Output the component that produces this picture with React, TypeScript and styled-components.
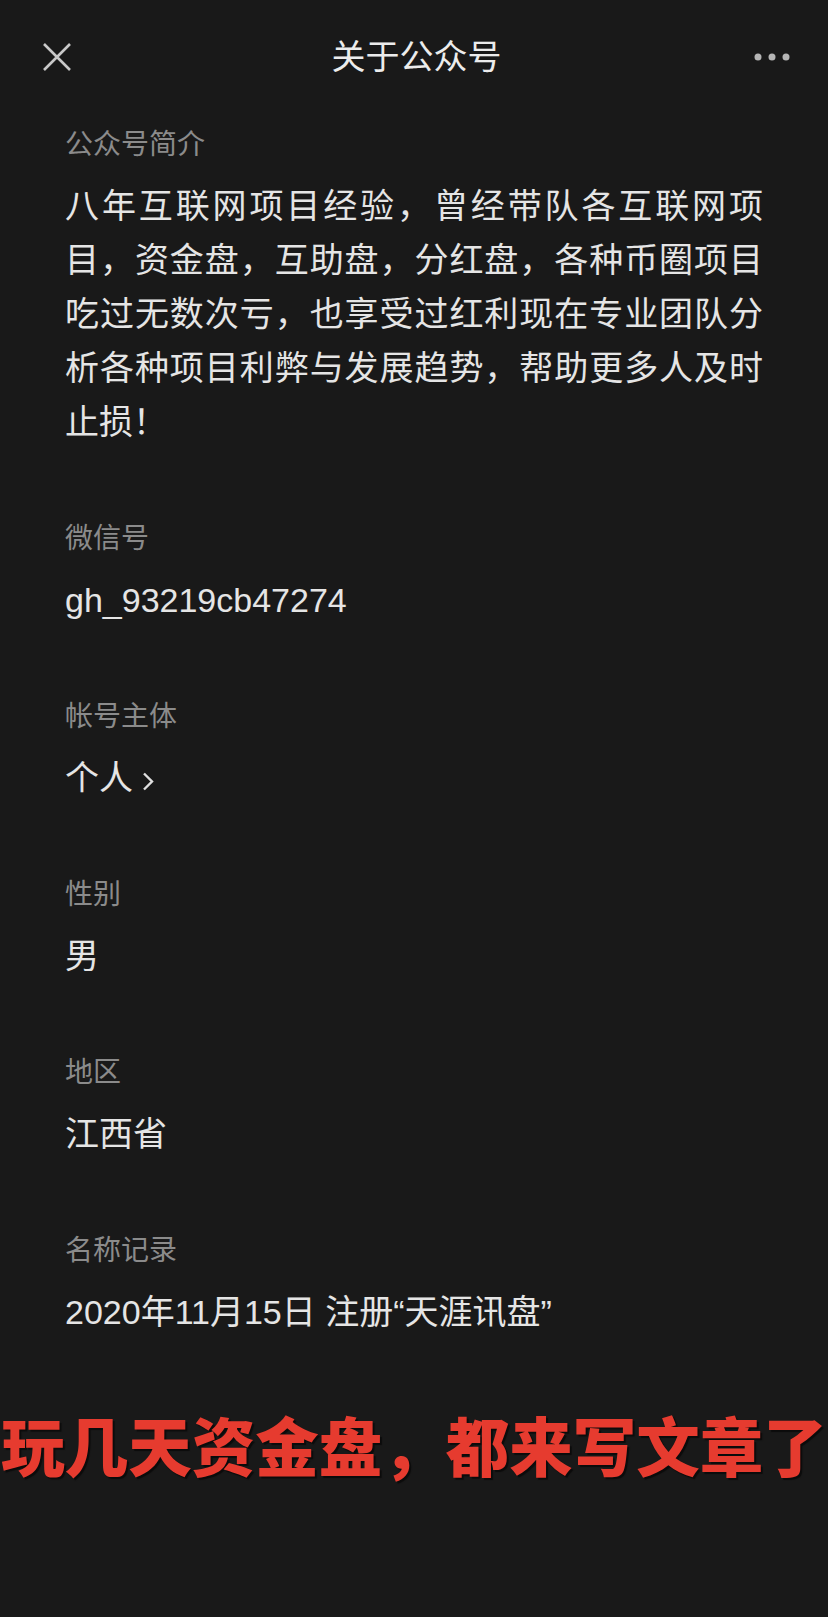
import React from "react";
import styled, { createGlobalStyle } from "styled-components";

const GlobalStyle = createGlobalStyle`
  html, body {
    margin: 0;
    padding: 0;
    background: #191919;
  }
  * { box-sizing: border-box; }
`;

const FONT = `"Liberation Sans", "Noto Sans CJK SC", sans-serif`;

const Page = styled.div`
  width: 828px;
  min-height: 1617px;
  background: #191919;
  font-family: ${FONT};
  color: #e5e5e5;
`;

const NavBar = styled.header`
  height: 114px;
  display: grid;
  grid-template-columns: 120px 1fr 120px;
  align-items: center;
  padding: 0 38px 0 43px;
`;

const NavLeft = styled.div`
  display: flex;
  align-items: center;
`;

const NavRight = styled.div`
  display: flex;
  align-items: center;
  justify-content: flex-end;
`;

const NavTitle = styled.h1`
  margin: 0;
  text-align: center;
  font-size: 34px;
  font-weight: 400;
  line-height: 40px;
  color: #ececec;
  letter-spacing: 0;
`;

const Content = styled.main`
  padding: 11px 65px 0 65px;
  display: flex;
  flex-direction: column;
  gap: 70px;
`;

const Section = styled.section`
  display: flex;
  flex-direction: column;
  gap: 14px;
`;

const Label = styled.div`
  font-size: 28px;
  line-height: 40px;
  color: #8b8b8b;
`;

const Value = styled.div`
  font-size: 34px;
  line-height: 54px;
  color: #e5e5e5;
  display: flex;
  align-items: center;
`;

const Paragraph = styled.p`
  margin: 0;
  font-size: 34px;
  line-height: 54px;
  color: #e5e5e5;
  text-align: justify;
  text-justify: inter-character;
`;

const Chevron = styled.svg`
  margin-left: 9px;
  margin-top: 6px;
`;

const Banner = styled.div`
  margin-top: 64px;
  height: 80px;
  line-height: 80px;
  text-align: center;
  font-family: "Noto Sans CJK SC", sans-serif;
  font-size: 63.5px;
  font-weight: 900;
  color: #e63b2f;
  white-space: nowrap;
  text-shadow: 2px 2px 1px rgba(0, 0, 0, 0.55);
`;

const CloseIcon = () => (
  <svg width="28" height="28" viewBox="0 0 28 28">
    <path d="M1 1 L27 27 M27 1 L1 27" stroke="#c9c9c9" strokeWidth="2.6" fill="none" />
  </svg>
);

const MoreIcon = () => (
  <svg width="36" height="8" viewBox="0 0 36 8">
    <circle cx="4" cy="4" r="3.5" fill="#b5b5b5" />
    <circle cx="18" cy="4" r="3.5" fill="#b5b5b5" />
    <circle cx="32" cy="4" r="3.5" fill="#b5b5b5" />
  </svg>
);

type Item = { label: string; value: string; link?: boolean };

const items: Item[] = [
  { label: "微信号", value: "gh_93219cb47274" },
  { label: "帐号主体", value: "个人", link: true },
  { label: "性别", value: "男" },
  { label: "地区", value: "江西省" },
  { label: "名称记录", value: "2020年11月15日 注册“天涯讯盘”" },
];

export default function App() {
  return (
    <Page>
      <GlobalStyle />
      <NavBar>
        <NavLeft>
          <CloseIcon />
        </NavLeft>
        <NavTitle>关于公众号</NavTitle>
        <NavRight>
          <MoreIcon />
        </NavRight>
      </NavBar>
      <Content>
        <Section>
          <Label>公众号简介</Label>
          <Paragraph>
            八年互联网项目经验，曾经带队各互联网项目，资金盘，互助盘，分红盘，各种币圈项目吃过无数次亏，也享受过红利现在专业团队分析各种项目利弊与发展趋势，帮助更多人及时止损！
          </Paragraph>
        </Section>
        {items.map((it) => (
          <Section key={it.label}>
            <Label>{it.label}</Label>
            <Value>
              {it.value}
              {it.link && (
                <Chevron width="12" height="19" viewBox="0 0 12 19">
                  <polyline points="2,1.5 10,9.5 2,17.5" stroke="#e0e0e0" strokeWidth="2.4" fill="none" />
                </Chevron>
              )}
            </Value>
          </Section>
        ))}
      </Content>
      <Banner>玩几天资金盘，都来写文章了</Banner>
    </Page>
  );
}
